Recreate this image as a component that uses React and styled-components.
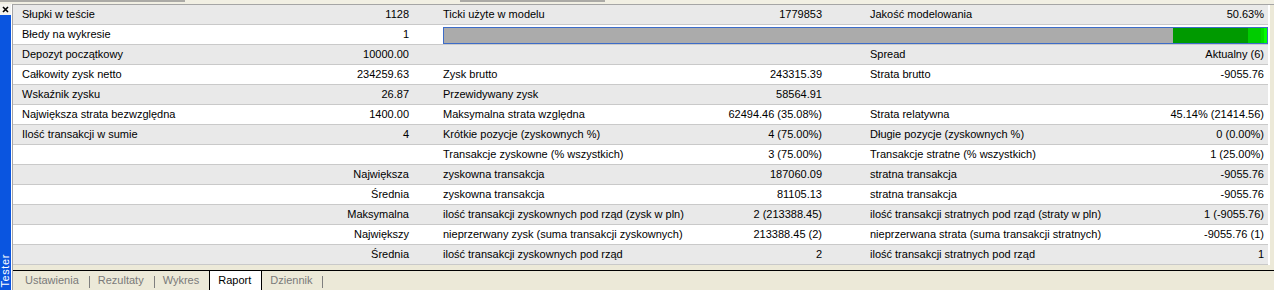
import React from 'react';
import styled, { createGlobalStyle } from 'styled-components';

const Global = createGlobalStyle`
  html, body { margin: 0; padding: 0; background: #ECE9D8; }
  body { font-family: "Liberation Sans", Arial, sans-serif; font-size: 11px; }
`;

const Window = styled.div`
  width: 1274px;
  height: 290px;
  display: flex;
  flex-direction: column;
  background: #ECE9D8;
  overflow: hidden;
  color: #000;
`;

const TopStrip = styled.div`
  height: 4px;
  flex: none;
  display: flex;
  align-items: flex-start;
  background: #F1EFE3;
`;

const Stub = styled.div`
  height: 2px;
  width: ${p => p.$w}px;
  margin-left: ${p => p.$ml || 0}px;
  background: #ABAAA6;
`;

const Body = styled.div`
  flex: 1;
  display: flex;
  min-height: 0;
`;

const Side = styled.div`
  width: 11px;
  flex: none;
  display: flex;
  flex-direction: column;
  border-right: 1px solid #FFFFFF;
`;

const CloseBox = styled.div`
  height: 11px;
  flex: none;
  display: flex;
  align-items: center;
  justify-content: center;
  background: #F4F3EE;
`;

const BlueBar = styled.div`
  flex: 1;
  background: #0A55E0;
  display: flex;
  flex-direction: column;
  justify-content: flex-end;
  align-items: center;
  padding-bottom: 2px;
`;

const VerticalTitle = styled.span`
  writing-mode: vertical-rl;
  transform: rotate(180deg);
  color: #FFFFFF;
  font-size: 11px;
  line-height: 11px;
  letter-spacing: 0.6px;
  white-space: nowrap;
`;

const Main = styled.div`
  flex: 1;
  display: flex;
  flex-direction: column;
  border-left: 1px solid #A5A5A5;
  border-top: 1px solid #A5A5A5;
`;

const Table = styled.div`
  width: 1255px;
  display: flex;
  flex-direction: column;
  border-right: 2px solid #FFFFFF;
`;

const Row = styled.div`
  display: grid;
  grid-template-columns: 287px 113px 287px 126px 294px 148px;
  height: 19px;
  border-bottom: 1px solid #C9C9C9;
  background: ${p => (p.$alt ? '#E9E9E9' : '#FFFFFF')};
`;

const Cell = styled.div`
  line-height: 19px;
  white-space: nowrap;
  overflow: hidden;
  text-align: ${p => p.$align};
  padding-left: ${p => (p.$align === 'left' ? p.$inset : 0)}px;
  padding-right: ${p => (p.$align === 'right' ? p.$inset : 0)}px;
`;

const BarCell = styled.div`
  grid-column: 3 / 7;
  padding-left: 30px;
  padding-top: 2px;
`;

const Bar = styled.div`
  height: 15px;
  border: 1px solid #3D6CC8;
  background: #ABABAB;
  display: flex;
  justify-content: flex-end;
`;

const Segment = styled.div`
  height: 100%;
  width: ${p => p.$w}px;
  background: ${p => p.$c};
`;

const TabBar = styled.div`
  margin-top: 5px;
  width: 1257px;
  border-top: 1px solid #000000;
  display: flex;
  align-items: stretch;
  padding-left: 4px;
  flex: 1;
`;

const Tab = styled.div`
  padding: 0 10px 0 8px;
  line-height: 19px;
  color: ${p => (p.$active ? '#000000' : '#7A7A7A')};
  background: ${p => (p.$active ? '#FFFFFF' : 'transparent')};
  border-left: ${p => (p.$active ? '1px solid #000' : 'none')};
  border-right: ${p => (p.$active ? '1px solid #000' : 'none')};
`;

const Sep = styled.div`
  width: 1px;
  height: 12px;
  align-self: center;
  background: #7F7F7F;
  margin-top: 2px;
`;

const cols = [
  { align: 'left', inset: 9 },
  { align: 'right', inset: 4 },
  { align: 'left', inset: 30 },
  { align: 'right', inset: 4 },
  { align: 'left', inset: 44 },
  { align: 'right', inset: 4 },
];

const rows = [
  ['Słupki w teście', '1128', 'Ticki użyte w modelu', '1779853', 'Jakość modelowania', '50.63%'],
  'bar',
  ['Depozyt początkowy', '10000.00', '', '', 'Spread', 'Aktualny (6)'],
  ['Całkowity zysk netto', '234259.63', 'Zysk brutto', '243315.39', 'Strata brutto', '-9055.76'],
  ['Wskaźnik zysku', '26.87', 'Przewidywany zysk', '58564.91', '', ''],
  ['Największa strata bezwzględna', '1400.00', 'Maksymalna strata względna', '62494.46 (35.08%)', 'Strata relatywna', '45.14% (21414.56)'],
  ['Ilość transakcji w sumie', '4', 'Krótkie pozycje (zyskownych %)', '4 (75.00%)', 'Długie pozycje (zyskownych %)', '0 (0.00%)'],
  ['', '', 'Transakcje zyskowne (% wszystkich)', '3 (75.00%)', 'Transakcje stratne (% wszystkich)', '1 (25.00%)'],
  ['', 'Największa', 'zyskowna transakcja', '187060.09', 'stratna transakcja', '-9055.76'],
  ['', 'Średnia', 'zyskowna transakcja', '81105.13', 'stratna transakcja', '-9055.76'],
  ['', 'Maksymalna', 'ilość transakcji zyskownych pod rząd (zysk w pln)', '2 (213388.45)', 'ilość transakcji stratnych pod rząd (straty w pln)', '1 (-9055.76)'],
  ['', 'Największy', 'nieprzerwany zysk (suma transakcji zyskownych)', '213388.45 (2)', 'nieprzerwana strata (suma transakcji stratnych)', '-9055.76 (1)'],
  ['', 'Średnia', 'ilość transakcji zyskownych pod rząd', '2', 'ilość transakcji stratnych pod rząd', '1'],
];

const segments = [
  { w: 75, c: '#009A00' },
  { w: 13, c: '#00CC00' },
  { w: 3, c: '#00DD00' },
  { w: 3, c: '#00FF00' },
];

const tabs = [
  { label: 'Ustawienia', sep: true },
  { label: 'Rezultaty', sep: true },
  { label: 'Wykres', sep: false },
  { label: 'Raport', active: true, sep: false },
  { label: 'Dziennik', sep: true },
];

export default function App() {
  return (
    <>
      <Global />
      <Window>
        <TopStrip>
          <Stub $w={185} />
          <Stub $w={145} $ml={275} />
        </TopStrip>
        <Body>
          <Side>
            <CloseBox>
              <svg width="7" height="7" viewBox="0 0 7 7">
                <path d="M1 1 L6 6 M6 1 L1 6" stroke="#000" strokeWidth="1.6" fill="none" />
              </svg>
            </CloseBox>
            <BlueBar>
              <VerticalTitle>Tester</VerticalTitle>
            </BlueBar>
          </Side>
          <Main>
            <Table>
              {rows.map((r, i) =>
                r === 'bar' ? (
                  <Row key={i} $alt={i % 2 === 0}>
                    <Cell $align="left" $inset={9}>Błedy na wykresie</Cell>
                    <Cell $align="right" $inset={4}>1</Cell>
                    <BarCell>
                      <Bar>
                        {segments.map((s, k) => (
                          <Segment key={k} $w={s.w} $c={s.c} />
                        ))}
                      </Bar>
                    </BarCell>
                  </Row>
                ) : (
                  <Row key={i} $alt={i % 2 === 0}>
                    {r.map((t, j) => (
                      <Cell key={j} $align={cols[j].align} $inset={cols[j].inset}>
                        {t}
                      </Cell>
                    ))}
                  </Row>
                )
              )}
            </Table>
            <TabBar>
              {tabs.map(t => (
                <React.Fragment key={t.label}>
                  <Tab $active={t.active}>{t.label}</Tab>
                  {t.sep && <Sep />}
                </React.Fragment>
              ))}
            </TabBar>
          </Main>
        </Body>
      </Window>
    </>
  );
}
